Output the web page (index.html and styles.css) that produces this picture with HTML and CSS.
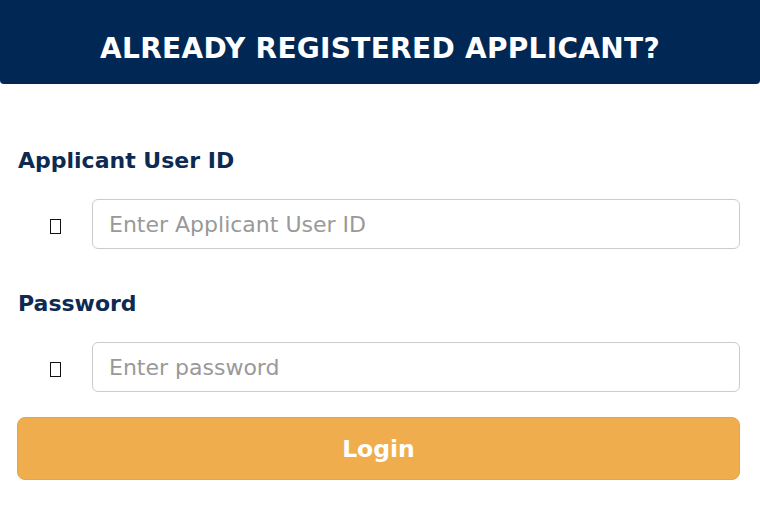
FILE: index.html
```html
<!DOCTYPE html>
<html lang="en">
<head>
<meta charset="utf-8">
<title>Already Registered Applicant</title>
<link rel="stylesheet" href="styles.css">
</head>
<body>
<div class="panel">
  <div class="panel-head">ALREADY REGISTERED APPLICANT?</div>
  <form class="panel-body">
    <label class="field-label" for="uid">Applicant User ID</label>
    <div class="field-row">
      <span class="icon-slot"><span class="tofu"></span></span>
      <input class="field-input" id="uid" type="text" placeholder="Enter Applicant User ID">
    </div>
    <label class="field-label" for="pwd">Password</label>
    <div class="field-row">
      <span class="icon-slot"><span class="tofu"></span></span>
      <input class="field-input" id="pwd" type="password" placeholder="Enter password">
    </div>
    <button class="login-btn" type="button">Login</button>
  </form>
</div>
</body>
</html>
```

FILE: styles.css
```css
html, body {
  margin: 0;
  padding: 0;
  background: #ffffff;
}
body {
  font-family: "DejaVu Sans", Verdana, sans-serif;
}
.panel {
  width: 760px;
}
.panel-head {
  background: #012855;
  color: #ffffff;
  height: 84px;
  display: flex;
  align-items: center;
  justify-content: center;
  font-weight: bold;
  font-size: 28px;
  letter-spacing: 0.3px;
  border-radius: 0 0 4px 4px;
  padding-top: 13px;
  box-sizing: border-box;
}
.panel-body {
  display: flex;
  flex-direction: column;
  padding: 64px 20px 0 17px;
  margin: 0;
}
.field-label {
  color: #0c2a52;
  font-weight: bold;
  font-size: 22px;
  line-height: 26px;
  margin-left: 1px;
}
.field-row {
  display: flex;
  align-items: center;
  margin-top: 25px;
  margin-bottom: 42px;
}
.field-row:last-of-type {
  margin-bottom: 25px;
}
.icon-slot {
  width: 75px;
  display: flex;
  justify-content: center;
  padding-left: 2px;
  box-sizing: border-box;
}
.tofu {
  display: block;
  width: 9px;
  height: 13px;
  border: 1px solid #111;
  margin-top: 4px;
}
.field-input {
  flex: 1;
  height: 50px;
  box-sizing: border-box;
  border: 1px solid #cccccc;
  border-radius: 6px;
  padding: 0 16px;
  font-family: "DejaVu Sans", Verdana, sans-serif;
  font-size: 22px;
  color: #333;
  background: #fff;
  outline: none;
}
.field-input::placeholder {
  color: #999999;
}
.login-btn {
  height: 63px;
  background: #efad4e;
  border: 1px solid #eca440;
  border-radius: 8px;
  color: #ffffff;
  font-family: "DejaVu Sans", Verdana, sans-serif;
  font-weight: bold;
  font-size: 23.5px;
  cursor: pointer;
}
```
